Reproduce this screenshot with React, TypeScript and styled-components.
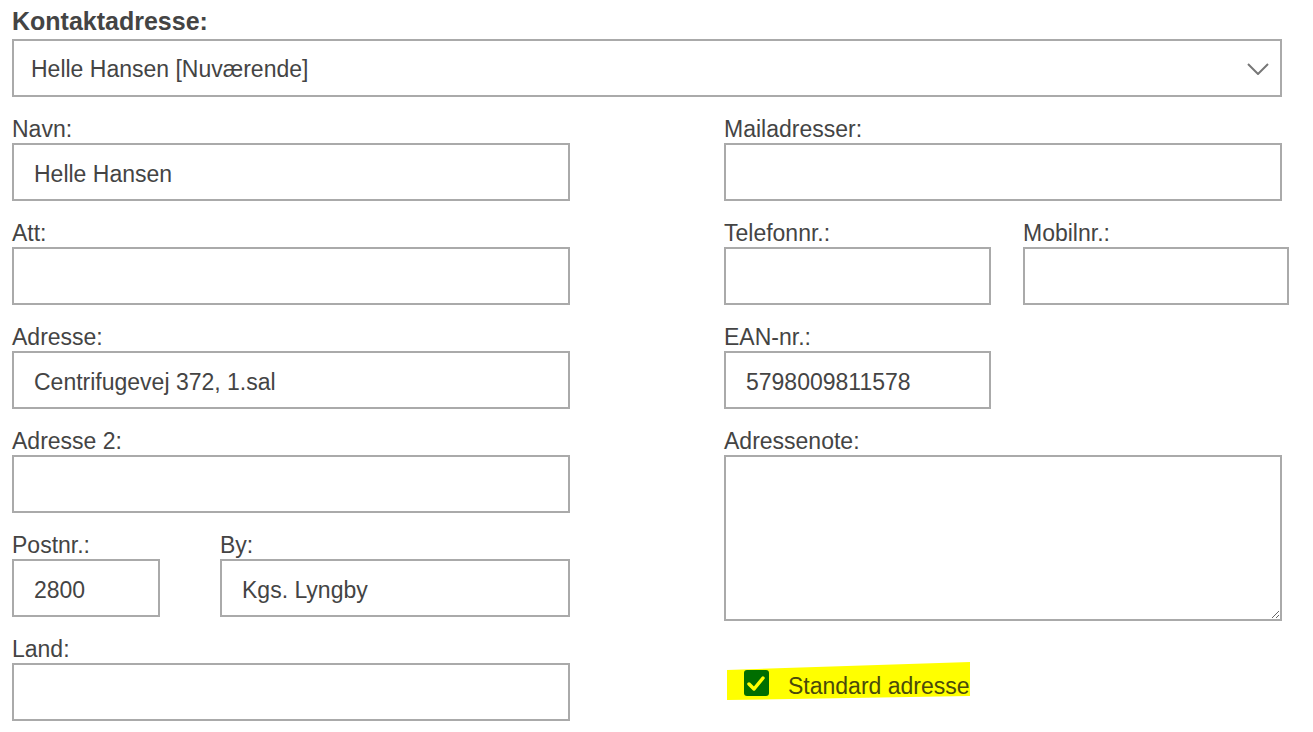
import styled, { createGlobalStyle } from "styled-components"

const GlobalStyle = createGlobalStyle`
  html, body {
    margin: 0;
    padding: 0;
    background: #fff;
  }
  body {
    font-family: "Liberation Sans", Arial, sans-serif;
    color: #444;
  }
`

const Page = styled.div`
  width: 1313px;
  height: 732px;
  box-sizing: border-box;
  padding: 7px 31px 0 12px;
  overflow: hidden;
`

const Heading = styled.div`
  font-size: 25px;
  line-height: 29px;
  font-weight: bold;
  color: #444;
  margin-bottom: 3px;
`

const SelectBox = styled.div`
  box-sizing: border-box;
  width: 1270px;
  height: 58px;
  border: 2px solid #aaa;
  display: flex;
  align-items: center;
  justify-content: space-between;
  padding: 2px 11px 0 17px;
  font-size: 23px;
  color: #444;
  margin-bottom: 19px;
`

const Columns = styled.div`
  display: grid;
  grid-template-columns: 558px 558px;
  column-gap: 154px;
  align-items: start;
`

const Column = styled.div`
  display: flex;
  flex-direction: column;
  gap: 19px;
`

const Pair = styled.div<{ $cols: string; $gap: number }>`
  display: grid;
  grid-template-columns: ${({ $cols }) => $cols};
  column-gap: ${({ $gap }) => $gap}px;
`

const Field = styled.div<{ $width?: number }>`
  display: flex;
  flex-direction: column;
  width: ${({ $width }) => ($width ? `${$width}px` : "auto")};
`

const Label = styled.label`
  font-size: 23px;
  line-height: 26px;
  margin-bottom: 1px;
  color: #444;
`

const TextInput = styled.input`
  box-sizing: border-box;
  width: 100%;
  height: 58px;
  margin: 0;
  border: 2px solid #aaa;
  border-radius: 0;
  padding: 5px 20px 0;
  font-family: "Liberation Sans", Arial, sans-serif;
  font-size: 23px;
  color: #444;
  background: #fff;
  outline: none;
`

const NoteArea = styled.textarea`
  box-sizing: border-box;
  width: 100%;
  height: 166px;
  margin: 0;
  border: 2px solid #aaa;
  border-radius: 0;
  padding: 10px 20px;
  font-family: "Liberation Sans", Arial, sans-serif;
  font-size: 23px;
  color: #444;
  outline: none;
  display: block;
`

const CheckRow = styled.div`
  position: relative;
  width: 243px;
  height: 38px;
  margin: 22px 0 0 3px;
  display: flex;
  align-items: center;
  gap: 19px;
  padding-left: 17px;
  box-sizing: border-box;
  font-size: 23px;
  color: #4a4a0a;

  &::before {
    content: "";
    position: absolute;
    inset: 0;
    background: #ffff00;
    clip-path: polygon(0 8px, 100% 0, 100% 34px, 0 100%);
    z-index: 0;
  }
`

const CheckBox = styled.span`
  position: relative;
  z-index: 1;
  width: 25px;
  height: 26px;
  border-radius: 3px;
  background: #006e00;
  display: block;
  margin-top: 3px;

  svg {
    display: block;
  }
`

const CheckText = styled.span`
  position: relative;
  z-index: 1;
  margin-top: 10px;
`

function Chevron() {
  return (
    <svg width="22" height="12" viewBox="0 0 22 12">
      <polyline points="1,1 11,11 21,1" fill="none" stroke="#777" strokeWidth="2" />
    </svg>
  )
}

function InputField({ label, value = "", width }: { label: string, value?: string, width?: number }) {
  return (
    <Field $width={width}>
      <Label>{label}</Label>
      <TextInput readOnly defaultValue={value} />
    </Field>
  )
}

export default function App() {
  return (
    <Page>
      <GlobalStyle />
      <Heading>Kontaktadresse:</Heading>
      <SelectBox>
        <span>Helle Hansen [Nuværende]</span>
        <Chevron />
      </SelectBox>

      <Columns>
        <Column>
          <InputField label="Navn:" value="Helle Hansen" />
          <InputField label="Att:" />
          <InputField label="Adresse:" value="Centrifugevej 372, 1.sal" />
          <InputField label="Adresse 2:" />
          <Pair $cols="148px 350px" $gap={60}>
            <InputField label="Postnr.:" value="2800" />
            <InputField label="By:" value="Kgs. Lyngby" />
          </Pair>
          <InputField label="Land:" />
        </Column>

        <Column>
          <InputField label="Mailadresser:" />
          <Pair $cols="267px 266px" $gap={32}>
            <InputField label="Telefonnr.:" />
            <InputField label="Mobilnr.:" />
          </Pair>
          <InputField label="EAN-nr.:" value="5798009811578" width={267} />
          <Field>
            <Label>Adressenote:</Label>
            <NoteArea readOnly />
          </Field>
          <CheckRow>
            <CheckBox>
              <svg width="25" height="26" viewBox="0 0 25 26">
                <polyline points="5,14 10,19 19,8" fill="none" stroke="#ffff00" strokeWidth="3.5" strokeLinecap="round" strokeLinejoin="round" />
              </svg>
            </CheckBox>
            <CheckText>Standard adresse</CheckText>
          </CheckRow>
        </Column>
      </Columns>
    </Page>
  )
}
